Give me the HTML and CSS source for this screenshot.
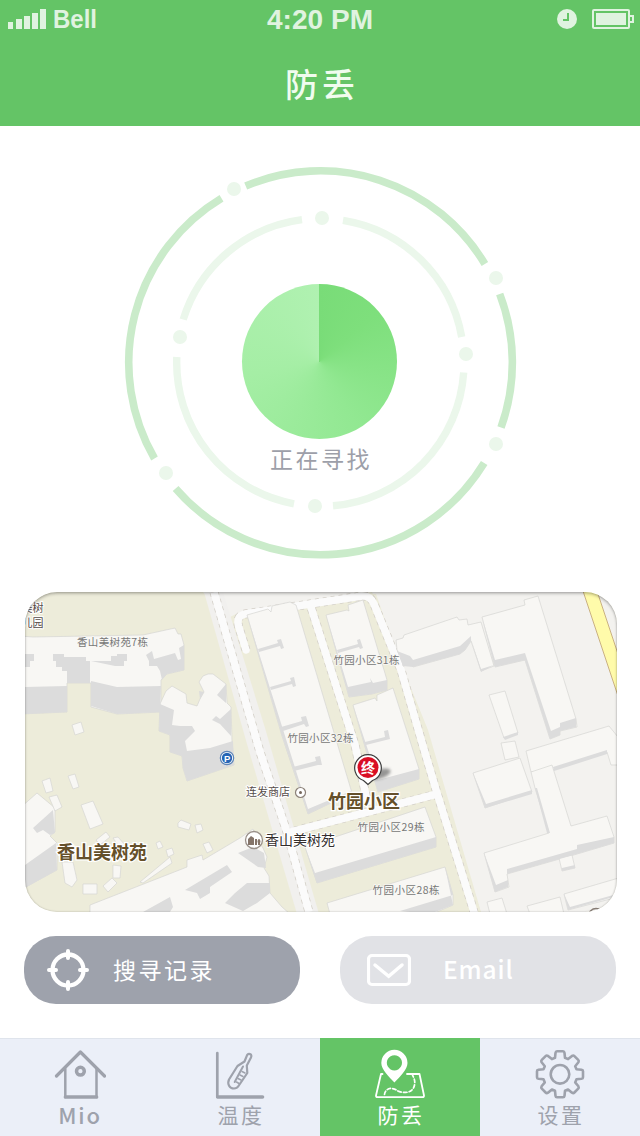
FILE: index.html
```html
<!DOCTYPE html>
<html lang="zh-CN">
<head>
<meta charset="utf-8">
<title>防丢</title>
<link rel="stylesheet" href="styles.css">
</head>
<body>
<div class="app">
  <header class="header">
    <svg class="status" viewBox="0 0 640 40">
      <path d="M8 22h5v7H8zM16 19h6v10h-6zM24 16h6v13h-6zM32 13h6v16h-6zM40 9h6v20h-6z"/>
      <text x="53" y="28" font-size="25.5" textLength="44" lengthAdjust="spacingAndGlyphs">Bell</text>
      <text x="267" y="28.5" font-size="27.5" textLength="106" lengthAdjust="spacingAndGlyphs">4:20 PM</text>
      <circle cx="567" cy="19" r="10"/>
      <path class="status-cut" d="M568 13v7h-5"/>
      <rect class="status-line" x="593" y="10" width="36" height="18" rx="1"/>
      <path d="M596 13h30v12h-30z"/>
      <path class="status-line" d="M630 16h3v6h-3"/>
    </svg>
    <h1 class="title">防丢</h1>
  </header>

  <section class="radar">
    <svg class="rings" viewBox="0 126 640 466">
      <g class="ring-outer">
        <path d="M245.7 186A191.7 191.7 0 0 1 484.9 264"/>
        <path d="M499.7 294A191.7 191.7 0 0 1 501 427.5"/>
        <path d="M484.2 463A191.7 191.7 0 0 1 175.6 488.5"/>
        <path d="M154.5 458.5A191.7 191.7 0 0 1 221.5 198.3"/>
      </g>
      <g class="ring-inner">
        <path d="M343 220.3A143.6 143.6 0 0 1 461.7 337"/>
        <path d="M463.7 372.5A143.6 143.6 0 0 1 333 505.8"/>
        <path d="M294 503.8A143.6 143.6 0 0 1 176.8 357"/>
        <path d="M183.2 319.5A143.6 143.6 0 0 1 302 219.6"/>
      </g>
      <g class="ring-dots">
        <circle cx="234" cy="189" r="7"/><circle cx="496" cy="278" r="7"/>
        <circle cx="496" cy="444" r="7"/><circle cx="166" cy="473" r="7"/>
        <circle cx="322" cy="218" r="7"/><circle cx="466" cy="354" r="7"/>
        <circle cx="315" cy="506" r="7"/><circle cx="180" cy="337" r="7"/>
      </g>
    </svg>
    <div class="scan">
      <div class="sweep"></div>
      <p class="scan-label">正在寻找</p>
    </div>
  </section>

  <section class="map">
    <svg class="map-canvas" viewBox="25 592 592 320">
      <defs><filter id="soft" x="-50%" y="-50%" width="200%" height="200%"><feGaussianBlur stdDeviation="1.8"/></filter></defs>
      <path class="ground" d="M203 592H617V912H481L428 730 372 592 360 594 240 614 226 619z"/>
      <path class="lawn" d="M295 605L362 594h14l52 150 53 170h-60L330 740z"/>
      <path class="lawn" d="M226 619L240 612 300 602 360 800 400 914H310L262 750z"/>
      <path class="verge" d="M204 592h19l42 136 54 186h-22l-50-170z"/>
      <g class="road-edge">
        <path d="M214 592L260 752 287 832 309 912"/>
        <path d="M246 650L238.500 626Q236 616 245 614L362 596Q370 595 374 604L401 670 423 746 437 793 474 912"/>
        <path d="M309 601L355 745 368 805"/>
        <path d="M287 833L437 794"/>
      </g>
      <g class="road">
        <path d="M214 592L260 752 287 832 309 912"/>
        <path stroke-linecap="round" d="M246 650L238.500 626Q236 616 245 614L362 596Q370 595 374 604L401 670 423 746 437 793 474 912"/>
        <path d="M309 601L355 745 368 805"/>
        <path d="M287 833L437 794"/>
      </g>
      <path class="highway" d="M582 588L622 708V666L596 588z"/>

      <g class="roof">
        <path d="M20 636L33 637 143 635 175 628 178 634 181 634 184 645V670L167 674 161 680V712L117 714 91 707V683H67V712L20 714z"/>
        <path d="M160 704L166 691 172 686 186 694 187 703 197 706 200 699 204 692 199 682 203 676 208 674 213 674 226 684 227 703 231 707 232 741 234 765 187 781 183 768 182 756 170 752V735L159 731z"/>
        <path d="M247 615L268 609 271 612 272 606 290 602 296 605 352 793 308 814 282 736z"/>
        <path d="M326 615L347 610 349 611 348 605 363 600 387 680V690L372 694 349 697z"/>
        <path d="M353 705L375 698 377 701 377 695 393 688 419 769V779L378 792z"/>
        <path d="M305 847L425 807 436 837V847L317 883z"/>
        <path d="M327 903L445 867 453 895V905L432 914H330z"/>
        <path d="M90 914V905L187 867 187 860 202 855 203 860 240 838 253 829 256 838 263 848 267 857 264 868 269 876 270 893 282 907 290 914z"/>
        <path d="M20 808L37 793 55 808V832L50 836 57 843V870L20 890z"/>
        <path d="M72 725L81 722 84 732 75 735zM42 781L50 778 53 791 46 793zM68 776L75 774 79 787 73 789zM49 797L57 795 62 807 55 811zM81 805L93 801 103 824 90 829zM96 840L106 832 110 837 100 845zM113 838L118 837 125 845 120 848zM62 862H73L77 880 72 887 65 883zM113 865L121 866 120 878H113zM83 884H97V894H83zM103 886L112 878 117 883 108 892zM178 823L181 820 191 824 189 830 178 827zM195 825L201 824 203 830 197 833zM156 843L160 841 163 847 158 849zM166 850L172 848 174 854 168 857zM203 844L209 842 213 850 207 853zM140 882L170 857 172 863 143 883z"/>
        <path d="M396 640L403 638 404 635 457 617 459 620 467 619 468 625 481 622 494 666 481 671 471 641 465 650 460 654 413 667 411 663 403 666 402 660 397 650z"/>
        <path d="M482 617L525 605 524 600 538 596 576 719 577 727 560 731V735L550 739 525 660 495 667z"/>
        <path d="M489 695L505 691 518 733 504 738zM501 743L515 741 519 757 505 760zM473 773L520 758 532 792 485 808z"/>
        <path d="M526 751L609 726 622 742V765L611 765 607 752 552 770 531 772z"/>
        <path d="M531 772L552 765 571 826 607 816 614 837V843L577 854 507 874 509 887 495 892 484 853 549 833 535 788z"/>
        <path d="M559 858L572 855 575 868 562 871zM564 894L622 877V896L568 910zM487 902L502 898 507 914H490zM527 906L560 897 564 914H530z"/>
      </g>
      <g class="wall">
        <path d="M25 654H34V661H30V667H25zM53 654H64V657H86V661H90V683H67V671H62V667H56V661H53zM91 661H111V656H117V654H127V661H124V666H115zM146 655L152 651 154 659 175 653 178 660 181 659 179 648 184 645V670L167 674 162 680 160 671 157 666 149 666V661zM25 687L67 686V712L25 714zM91 681L117 687 161 686 160 712 117 714 91 706z"/>
        <path d="M160 704L174 710 172 725 180 726 192 726 195 731 185 741 187 751 210 748 233 741 234 765 187 781 183 768 182 756 170 752V735L159 731zM204 692L200 699 199 691zM226 684L217 695 226 703zM212 720L216 716 220 719 231 709V736L220 724z"/>
        <path d="M247 615L308 809 351 791 352 793 308 814 282 736zM258 649L278 643 277 640 281 639 284 648 281 649 280 646 259 652zM270 687L291 681 290 678 294 677 296 686 293 687 292 684 271 690zM281 727L302 721 301 717 306 716 309 726 306 727 304 724 283 731zM293 767L316 761 315 757 320 756 322 765 318 765 294 771z"/>
        <path d="M326 615L348 687 371 682 370 678 373 683 387 680V690L372 694 349 697zM337 650L358 644 357 640 360 639 363 648 360 649 359 647 338 653zM353 705L378 780 419 769V779L378 792zM365 742L385 737 384 731 388 730 390 739 366 745z"/>
        <path d="M305 847L315 873 436 837V847L317 883zM445 867L453 895 400 911 430 914 453 905z"/>
        <path d="M185 890L227 865 232 872 210 887 210 893 200 899 197 893zM238 853L253 847 264 853 266 868 258 867zM235 893L247 883 270 883V893L257 903 243 911 225 903zM143 912L170 897 173 907 170 912zM33 828L53 810 55 833 50 835 43 830 37 833zM25 865L56 843 57 870 25 888z"/>
        <path d="M410 656L413 660 460 646 471 636 471 641 465 650 460 654 413 667 403 666 397 651zM482 617L495 660 525 653 551 731 560 727V723L576 718V727L560 731V735L550 739 525 660 495 667zM470 636L481 669 494 665 481 672z"/>
        <path d="M553 767L607 750V754L554 771zM535 788L537 788 550 833H547zM484 853L496 885 508 880V887L495 892zM507 869L577 849V845L614 837V843L577 854 507 874zM473 773L486 804 532 790V794L485 808zM503 737L518 732V735L505 740zM562 868L575 865V868L562 871zM564 894L570 907 617 894V896L568 910z"/>
      </g>

      <g class="label-small">
        <text x="77" y="646" textLength="71">香山美树苑7栋</text>
        <text x="333.500" y="664" textLength="66">竹园小区31栋</text>
        <text x="287.500" y="741.500" textLength="66">竹园小区32栋</text>
        <text x="357.500" y="831" textLength="67">竹园小区29栋</text>
        <text x="372.500" y="893.500" textLength="67">竹园小区28栋</text>
      </g>
      <g class="label-place">
        <text x="21.500" y="612">美树</text>
        <text x="21.500" y="627">儿园</text>
        <text x="246" y="796">连发商店</text>
      </g>
      <text class="label-site" x="265" y="845">香山美树苑</text>
      <text class="label-area" x="57" y="859">香山美树苑</text>
      <text class="label-area" x="328" y="807.500">竹园小区</text>

      <circle cx="227" cy="758" r="6.700" fill="#fff" stroke="#5f86b8" stroke-width="1.200"/>
      <circle cx="227" cy="758" r="5.200" fill="#2565b5"/>
      <text class="parking" x="227.200" y="761.500">P</text>
      <circle cx="300.500" cy="792.500" r="5" fill="#fff" stroke="#8b8078" stroke-width="1.200"/>
      <circle cx="300.500" cy="792.500" r="1.500" fill="#75675c"/>
      <circle cx="254" cy="840" r="8.500" fill="#fff" stroke="#9a918a" stroke-width="1.300"/>
      <path d="M249 845v-6l3-3 3 2v7zm7 0v-6h2v6zm4-6a2 2.500 0 0 0-1 4v2h2v-2a2 2.500 0 0 0-1-4" transform="translate(-1 0)" fill="#85756a"/>
      <circle cx="596" cy="916" r="7.500" fill="#fff" stroke="#8b8078" stroke-width="1.300"/>

      <ellipse cx="380" cy="774" rx="11" ry="4.500" transform="rotate(-18 380 774)" fill="#555" opacity=".6" filter="url(#soft)"/>
      <path d="M368 784.500L363.500 780.500A13.300 13.300 0 1 1 372.500 780.500z" fill="#fff" stroke="#3c3c3c" stroke-width="1.200"/>
      <circle cx="368" cy="767.500" r="10.500" fill="#d90f24"/>
      <text class="pin-text" x="368" y="772.500">终</text>
    </svg>
  </section>

  <nav class="actions">
    <button class="action action-log">
      <svg class="action-icon" viewBox="46 948 44 44">
        <circle cx="68" cy="970" r="15.500" stroke-width="4.300"/>
        <path d="M68 951v7M68 982v7M49 970h7M80 970h7" stroke-width="4"/>
      </svg>
      <span>搜寻记录</span>
    </button>
    <button class="action action-mail">
      <svg class="action-icon" viewBox="367 948 44 44">
        <rect x="368.500" y="955.500" width="41" height="29" rx="3.500" stroke-width="3.200"/>
        <path d="M375 965l13.700 11.300L402 965" stroke-width="3.500"/>
      </svg>
      <span>Email</span>
    </button>
  </nav>

  <nav class="tabs">
    <a class="tab">
      <svg viewBox="54 1048 52 52">
        <path d="M56.500 1076L80.400 1052 104.500 1076" stroke-width="3.200"/>
        <path d="M65.300 1069v28M96.500 1069v28" stroke-width="2.500"/>
        <path d="M65.500 1097h31" stroke-width="3.700"/>
        <circle cx="80.400" cy="1071.200" r="3.900" stroke-width="3.500"/>
      </svg>
      <span class="latin">Mio</span>
    </a>
    <a class="tab">
      <svg viewBox="214 1048 52 52">
        <path d="M217.300 1053v44" stroke-width="2.700"/>
        <path d="M217.800 1097h44.700" stroke-width="3.600"/>
        <path d="M251 1054.700Q249 1053 247.300 1054.700L244.500 1061.500 237.500 1066 229 1079.500C227 1084 229.500 1088.500 234 1088.500Q237 1088.500 238.500 1086L247.300 1073 246.800 1065.500 251 1057.500Q251.800 1056 251 1054.700z" stroke-width="2.200"/>
        <path d="M243 1066.500L234.700 1082" stroke-width="2"/>
        <path d="M242 1071.500l3 1.500M240 1075l3 1.500M238 1078.500l3 1.500M236.500 1082l2.500 1.500" stroke-width="1.500"/>
      </svg>
      <span>温度</span>
    </a>
    <a class="tab tab-active">
      <svg viewBox="374 1048 52 52">
        <path class="solid" fill-rule="evenodd" d="M394.400 1082.500C389 1076.500 381.300 1069.500 381.300 1062.900A13.100 13.100 0 0 1 407.500 1062.900C407.500 1069.500 400 1076.500 394.400 1082.500zM394.400 1055.200a7.600 7.600 0 1 0 .01 0z"/>
        <path d="M382.500 1074H381L376 1095.500Q376 1097.200 377.500 1097.200H422.500Q424 1097.200 424 1095.500L419.500 1074H407" stroke-width="1.800"/>
        <path d="M384.500 1094.500C385 1088.500 392 1086.500 397 1090.500C402 1093.500 413 1094 414.500 1085C415.500 1080 413.500 1077.500 412.500 1075" stroke-width="1.700" stroke-dasharray="3.500 2.200"/>
      </svg>
      <span>防丢</span>
    </a>
    <a class="tab">
      <svg viewBox="-26 -26.300 52 52">
        <path stroke-width="2.600" d="M-5-16.500L-4.500-21.500Q-4.300-23-3-23H3Q4.300-23 4.500-21.500L5-16.500 8.100-15.200 12-18.400Q13.400-19.200 14.400-18.200L18.200-14.400Q19.200-13.400 18.400-12L15.200-8.100 16.500-5 21.500-4.500Q23-4.300 23-3V3Q23 4.300 21.500 4.500L16.500 5 15.200 8.100 18.400 12Q19.200 13.400 18.200 14.400L14.400 18.200Q13.400 19.200 12 18.400L8.100 15.200 5 16.500 4.500 21.500Q4.300 23 3 23H-3Q-4.300 23-4.500 21.500L-5 16.500-8.100 15.200-12 18.400Q-13.400 19.200-14.400 18.200L-18.200 14.400Q-19.200 13.400-18.400 12L-15.200 8.100-16.500 5-21.500 4.500Q-23 4.300-23 3V-3Q-23-4.300-21.500-4.500L-16.500-5-15.200-8.100-18.400-12Q-19.200-13.400-18.200-14.400L-14.400-18.200Q-13.400-19.200-12-18.400L-8.100-15.200z"/>
        <circle r="9.300" stroke-width="2.600"/>
      </svg>
      <span>设置</span>
    </a>
  </nav>
</div>
</body>
</html>
```
FILE: styles.css
```css
* { box-sizing: border-box; }
body { margin: 0; background: #fff; font-family: "Noto Sans CJK SC", sans-serif; }
svg { display: block; }
.app { width: 640px; height: 1136px; display: flex; flex-direction: column; overflow: hidden; }

.header { height: 126px; background: #64c466; flex: none; }
.status { width: 640px; height: 40px; fill: #e0f3e0; font-family: "Liberation Sans", sans-serif; font-weight: 700; }
.status-line { fill: none; stroke: #e0f3e0; stroke-width: 2; }
.status-cut { fill: none; stroke: #64c466; stroke-width: 2; }
.title { margin: 0; height: 86px; line-height: 86px; text-align: center; font-size: 33px; font-weight: 500; letter-spacing: 4px; text-indent: 4px; color: #f0fcef; }

.radar { height: 466px; flex: none; display: grid; }
.rings { width: 640px; height: 466px; grid-area: 1 / 1; fill: none; }
.ring-outer { stroke: #caebca; stroke-width: 7.6px; }
.ring-inner { stroke: #ebf7eb; stroke-width: 7.4px; }
.ring-dots { fill: #ebf7eb; }
.scan { grid-area: 1 / 1; padding-top: 158px; display: flex; flex-direction: column; align-items: center; }
.sweep { width: 155px; height: 155px; margin-right: 1px; border-radius: 50%; background: conic-gradient(#79dc78 0deg, #7edf7c 50deg, #92e892 150deg, #a5eea5 260deg, #b0f1b1 360deg); }
.scan-label { margin: 2px 0 0; line-height: 34px; font-size: 23px; letter-spacing: 2.5px; text-indent: 2px; color: #9d9fa9; }

.map { position: relative; width: 592px; height: 320px; margin-left: 25px; flex: none; overflow: hidden; border-radius: 32px; background: #edecda; }
.map::after { content: ""; position: absolute; inset: 0; border-radius: 32px; box-shadow: inset 0 2px 3px rgba(0,0,0,.22), inset 0 0 2px rgba(0,0,0,.25); }
.map-canvas { width: 592px; height: 320px; }
.ground { fill: #f3f2ef; }
.lawn { fill: #edecda; }
.verge { fill: #f1f0ee; }
.road-edge { fill: none; stroke: #d2cec6; stroke-width: 9px; stroke-dasharray: 4 4; }
.road { fill: none; stroke: #fbfbfb; stroke-width: 7.5px; }
.highway { fill: #fffbaa; stroke: #c9b183; stroke-width: 1px; }
.roof { fill: #f8f7f4; stroke: #d6d5d2; stroke-width: .7px; }
.wall { fill: #dcdcdc; }
.label-small { font-size: 10.5px; fill: #777; paint-order: stroke; stroke: #f8f7f4; stroke-width: 1.5px; }
.label-place { font-size: 11px; fill: #554c49; paint-order: stroke; stroke: #fff; stroke-width: 2px; }
.label-site { font-size: 14px; fill: #332d2c; paint-order: stroke; stroke: #fff; stroke-width: 2px; }
.label-area { font-size: 18px; font-weight: 700; fill: #65502a; paint-order: stroke; stroke: #fff; stroke-width: 2.5px; }
.parking { font: 700 9.5px "Liberation Sans", sans-serif; fill: #fff; text-anchor: middle; }
.pin-text { font-size: 14px; font-weight: 700; fill: #fff; text-anchor: middle; }

.actions { display: flex; gap: 40px; padding: 24px 24px 0; height: 126px; flex: none; }
.action { width: 276px; height: 68px; padding: 0 0 0 22px; border: 0; border-radius: 32px; display: flex; align-items: center; font-family: inherit; font-size: 23px; letter-spacing: 2.5px; color: #fff; }
.action span { padding-bottom: 3px; }
.action-log { background: #9ea2ac; gap: 23px; }
.action-mail { background: #e1e2e6; padding-left: 27px; gap: 32px; font-size: 24.5px; font-weight: 500; letter-spacing: .9px; }
.action-icon { width: 44px; height: 44px; fill: none; stroke: #fff; stroke-linecap: round; }

.tabs { display: flex; height: 98px; flex: none; }
.tab { width: 160px; padding-top: 9px; display: flex; flex-direction: column; align-items: center; background: #ebeff8; border-top: 1px solid #dfe4ec; color: #9ea2ac; font-size: 21px; line-height: 28px; letter-spacing: 2.5px; text-indent: 2px; }
.tab svg { width: 52px; height: 52px; fill: none; stroke: currentColor; stroke-linecap: round; stroke-linejoin: round; }
.tab .solid { fill: currentColor; stroke: none; }
.latin { font-size: 22px; font-weight: 500; letter-spacing: 1.8px; text-indent: 0; }
.tab-active { background: #64c466; border-color: #64c466; color: #fff; }
```
